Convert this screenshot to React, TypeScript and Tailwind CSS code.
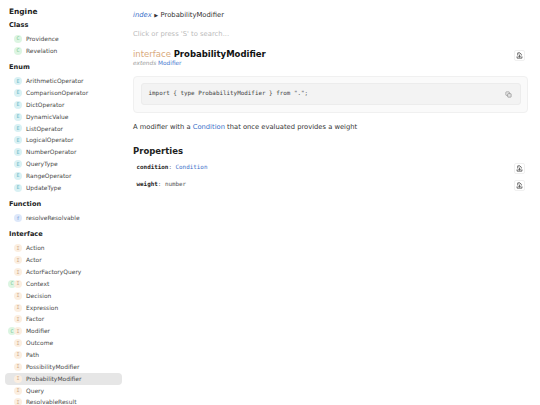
import type { ReactNode } from "react";

type Kind = "C" | "E" | "f" | "I";

const badgeStyles: Record<Kind, string> = {
  C: "bg-[#dcf5e2] text-[#7cc596]",
  E: "bg-[#d9f1f4] text-[#74bcc8]",
  f: "bg-[#dde8fa] text-[#6f92d6]",
  I: "bg-[#fbeee0] text-[#d0ad8a]",
};

const sections: { title: string; items: { name: string; kinds: Kind[]; active?: boolean }[] }[] = [
  {
    title: "Class",
    items: [
      { name: "Providence", kinds: ["C"] },
      { name: "Revelation", kinds: ["C"] },
    ],
  },
  {
    title: "Enum",
    items: [
      "ArithmeticOperator",
      "ComparisonOperator",
      "DictOperator",
      "DynamicValue",
      "ListOperator",
      "LogicalOperator",
      "NumberOperator",
      "QueryType",
      "RangeOperator",
      "UpdateType",
    ].map((name) => ({ name, kinds: ["E"] as Kind[] })),
  },
  {
    title: "Function",
    items: [{ name: "resolveResolvable", kinds: ["f"] }],
  },
  {
    title: "Interface",
    items: [
      { name: "Action", kinds: ["I"] },
      { name: "Actor", kinds: ["I"] },
      { name: "ActorFactoryQuery", kinds: ["I"] },
      { name: "Context", kinds: ["C", "I"] },
      { name: "Decision", kinds: ["I"] },
      { name: "Expression", kinds: ["I"] },
      { name: "Factor", kinds: ["I"] },
      { name: "Modifier", kinds: ["C", "I"] },
      { name: "Outcome", kinds: ["I"] },
      { name: "Path", kinds: ["I"] },
      { name: "PossibilityModifier", kinds: ["I"] },
      { name: "ProbabilityModifier", kinds: ["I"], active: true },
      { name: "Query", kinds: ["I"] },
      { name: "ResolvableResult", kinds: ["I"] },
    ],
  },
];

function Badge({ kind, className = "" }: { kind: Kind; className?: string }) {
  return (
    <span
      className={`flex h-[8px] w-[8px] items-center justify-center rounded-full font-['DejaVu_Sans_Mono',monospace] text-[5px] leading-none ${badgeStyles[kind]} ${className}`}
    >
      {kind}
    </span>
  );
}

function SideItem({ name, kinds, active }: { name: string; kinds: Kind[]; active?: boolean }) {
  return (
    <div
      className={`flex h-[11.85px] items-center rounded-[4px] text-[5.95px] leading-none text-[#4a4a4a] ${
        active ? "bg-[#e6e6e6]" : ""
      }`}
    >
      <div className="flex w-[17px] shrink-0 justify-end">
        {kinds.map((kind, i) => (
          <Badge key={kind} kind={kind} className={i > 0 ? "-ml-[2px]" : ""} />
        ))}
      </div>
      <span className="ml-[4px]">{name}</span>
    </div>
  );
}

function CopyButton({ children, className = "" }: { children: ReactNode; className?: string }) {
  return (
    <div
      className={`mr-[3px] flex h-[11px] w-[11px] items-center justify-center rounded-[2px] border border-[#f0f0f0] bg-white ${className}`}
    >
      {children}
    </div>
  );
}

function DownloadDoc() {
  return (
    <svg width="7" height="7" viewBox="0 0 16 16" fill="none" stroke="#444" strokeWidth="1.8">
      <path d="M4 8V2h5l3 3v3" />
      <path d="M2.5 10v4h11v-4" />
      <path d="M8 6v6M5.5 9.5 8 12l2.5-2.5" />
    </svg>
  );
}

function CopyIcon() {
  return (
    <svg width="7" height="7" viewBox="0 0 16 16" fill="none" stroke="#999" strokeWidth="1.8">
      <rect x="2" y="2" width="8" height="8" rx="1" />
      <rect x="6" y="6" width="8" height="8" rx="1" fill="#e4e4e4" />
    </svg>
  );
}

function PropertyRow({ name, children }: { name: string; children: ReactNode }) {
  return (
    <div className="flex h-[17px] items-center justify-between">
      <div className="pl-[3.5px] font-['DejaVu_Sans_Mono',monospace] text-[5.9px] leading-none text-[#555]">
        <span className="font-bold text-[#222]">{name}</span>: {children}
      </div>
      <CopyButton>
        <DownloadDoc />
      </CopyButton>
    </div>
  );
}

export default function App() {
  return (
    <div className="flex h-[405px] w-[540px] overflow-hidden bg-white font-['DejaVu_Sans',sans-serif]">
      <aside className="w-[121.5px] shrink-0 pl-[5px]">
        <h2 className="mt-[6.5px] -mb-[2px] pl-[4px] text-[7.4px] leading-[10px] font-bold text-[#222]">Engine</h2>
        {sections.map((section) => (
          <div key={section.title} className="mb-[3px]">
            <h3 className="mt-[5.5px] mb-[3px] pl-[4px] text-[6.6px] leading-[10px] font-bold text-[#222]">
              {section.title}
            </h3>
            {section.items.map((item) => (
              <SideItem key={item.name} {...item} />
            ))}
          </div>
        ))}
      </aside>

      <main className="flex-1 pt-[10px] pr-[12px] pl-[11.5px]">
        <div className="flex h-[10px] items-center text-[6.8px] leading-none text-[#333]">
          <span className="text-[#3b6fc9] italic">index</span>
          <span className="mx-[2.5px] text-[5px]">▶</span>
          <span>ProbabilityModifier</span>
        </div>

        <p className="mt-[9px] text-[6.8px] leading-[10px] text-[#bbb]">Click or press 'S' to search...</p>

        <div className="mt-[9px] flex items-start justify-between">
          <div>
            <h1 className="text-[8.5px] leading-[12px] font-normal text-[#d9aa7c]">
              interface <span className="font-bold text-[#111]">ProbabilityModifier</span>
            </h1>
            <p className="text-[5.8px] leading-[7px] text-[#999] italic">
              extends <span className="text-[#4a7bd0] not-italic">Modifier</span>
            </p>
          </div>
          <CopyButton className="mt-[2px]">
            <DownloadDoc />
          </CopyButton>
        </div>

        <div className="mt-[8.5px] rounded-[4px] border border-[#f0f0f0] bg-[#fafafa] p-[6.5px]">
          <div className="flex h-[22px] items-center justify-between rounded-[3px] border border-[#ececec] bg-[#f3f3f3] pr-[8px] pl-[7px]">
            <code className="font-['DejaVu_Sans_Mono',monospace] text-[5.9px] leading-none text-[#444]">
              import {"{"} type ProbabilityModifier {"}"} from ".";
            </code>
            <CopyIcon />
          </div>
        </div>

        <p className="mt-[8.5px] text-[6.75px] leading-[12px] text-[#333]">
          A modifier with a <span className="text-[#3b6fc9]">Condition</span> that once evaluated provides a weight
        </p>

        <h2 className="mt-[12px] text-[8.5px] leading-[12px] font-bold text-[#222]">Properties</h2>

        <div className="mt-[2.5px]">
          <PropertyRow name="condition">
            <span className="text-[#3b6fc9]">Condition</span>
          </PropertyRow>
          <PropertyRow name="weight">number</PropertyRow>
        </div>
      </main>
    </div>
  );
}
